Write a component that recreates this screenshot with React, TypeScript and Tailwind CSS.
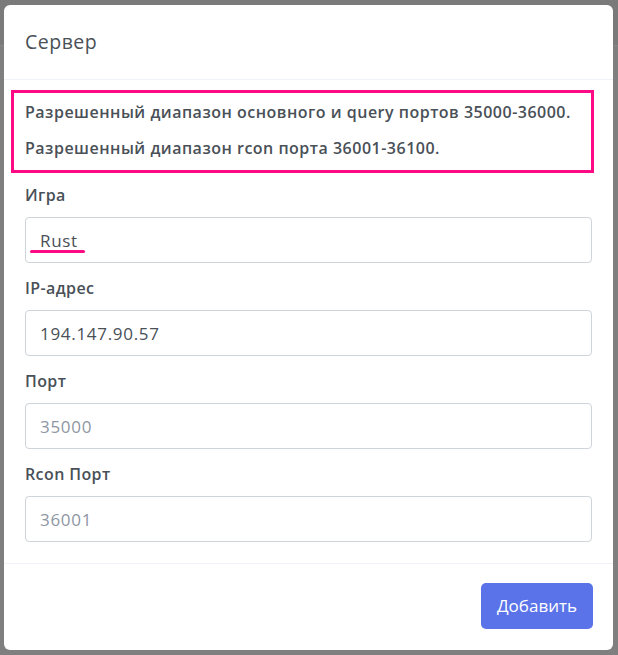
const fields = [
  { label: "Игра", value: "Rust", placeholder: "", mark: true },
  { label: "IP-адрес", value: "194.147.90.57", placeholder: "" },
  { label: "Порт", value: "", placeholder: "35000" },
  { label: "Rcon Порт", value: "", placeholder: "36001" },
];

const font = { fontFamily: '"Open Sans", "Noto Sans", sans-serif' };

export default function App() {
  return (
    <div className="relative h-[655px] w-[618px] overflow-hidden bg-[#7f7f7f]" style={font}>
      {/* page behind the dimmed backdrop */}
      <div className="h-[45px] bg-[#7a7a7a]" />
      <div className="h-px bg-[#868686]" />

      {/* modal */}
      <div className="absolute left-[4px] top-[5px] flex h-[645px] w-[609px] flex-col rounded-[6px] bg-white">
        <div className="flex h-[75px] items-center border-b border-[#eff2f7] px-[21px]">
          <h2 className="text-[19.5px] font-normal tracking-[0.5px] text-[#495057]">Сервер</h2>
        </div>

        <div className="flex flex-col px-[21px] pt-[10px]">
          <div className="-ml-[14px] -mr-[2px] border-[3px] border-[#ff0a85] pl-[11px] pt-[1px] pb-[4px] text-[16px] font-semibold leading-[36px] tracking-[0.5px] text-[#495057]">
            <p>Разрешенный диапазон основного и query портов 35000-36000.</p>
            <p>Разрешенный диапазон rcon порта 36001-36100.</p>
          </div>

          <div className="mt-[8px] flex flex-col">
            {fields.map((f) => (
              <div key={f.label} className="flex h-[93px] flex-col">
                <label className="text-[16px] font-semibold leading-[28px] tracking-[0.4px] text-[#495057]">{f.label}</label>
                <div className="relative mt-[8px]">
                  <input
                    readOnly
                    value={f.value}
                    placeholder={f.placeholder}
                    className="h-[46px] w-full rounded-[4px] border border-[#ced4da] bg-white px-[14px] text-[17px] tracking-[0.7px] text-[#495057] outline-none placeholder:text-[#8e96a4]"
                  />
                  {f.mark && (
                    <span className="absolute left-[5px] top-[33px] h-[3px] w-[55px] rounded-full bg-[#ff0a85]" />
                  )}
                </div>
              </div>
            ))}
          </div>
        </div>

        <div className="mt-auto flex h-[87px] items-center justify-end border-t border-[#eff2f7] px-[20px]">
          <button className="mb-[3px] h-[46px] rounded-[5px] bg-[#5a73e8] px-[16px] text-[17px] text-white">Добавить</button>
        </div>
      </div>
    </div>
  );
}
